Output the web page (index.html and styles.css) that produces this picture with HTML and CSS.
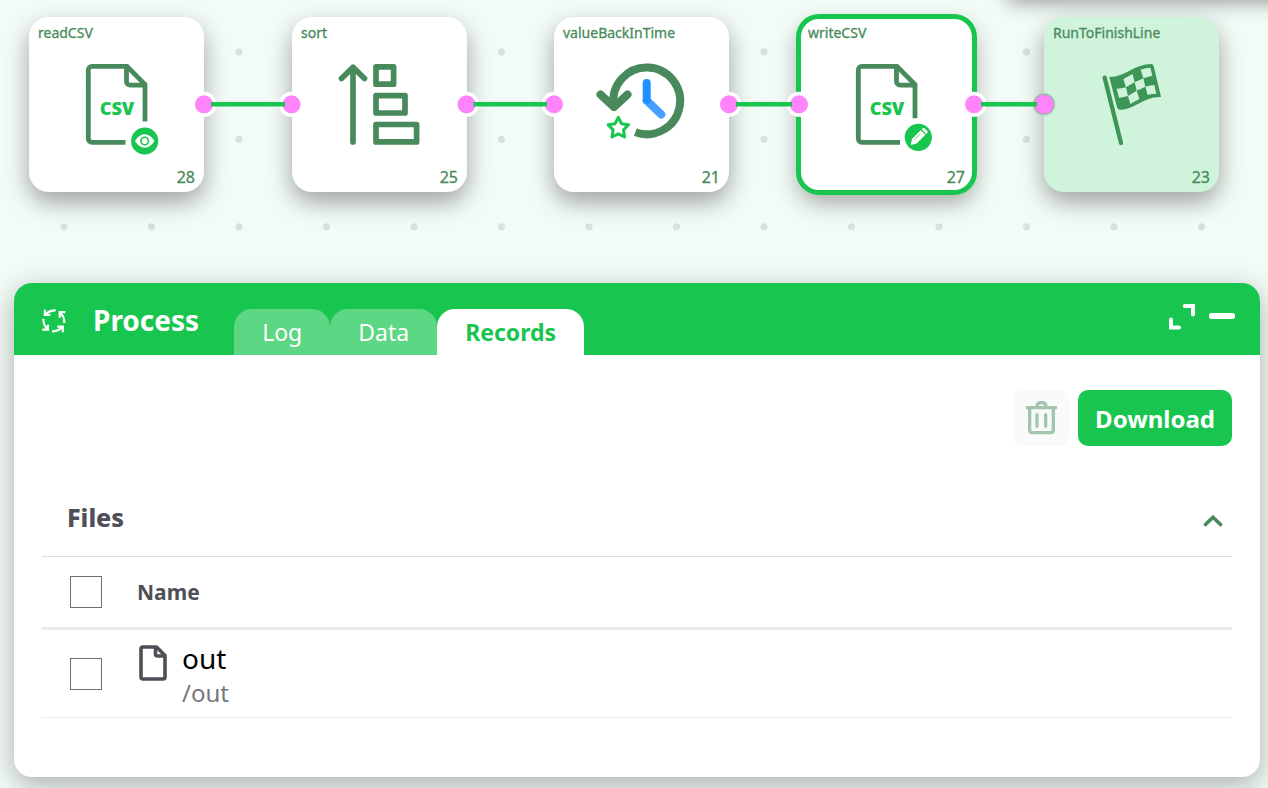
FILE: index.html
```html
<!DOCTYPE html>
<html lang="en">
<head>
<meta charset="utf-8">
<meta name="viewport" content="width=device-width, initial-scale=1">
<title>Process</title>
<link rel="stylesheet" href="styles.css">
</head>
<body>
<main class="app">
  <section class="canvas" aria-label="Pipeline">
    <svg class="grid" aria-hidden="true">
      <defs>
        <pattern id="dots" width="175" height="175" patternUnits="userSpaceOnUse">
          <circle cx="64" cy="51.8" r="3.6"/><circle cx="151.5" cy="51.8" r="3.6"/>
          <circle cx="64" cy="139.3" r="3.6"/><circle cx="151.5" cy="139.3" r="3.6"/>
        </pattern>
      </defs>
      <rect width="100%" height="100%" fill="url(#dots)"/>
    </svg>
    <div class="toolbar-shade"></div>

    <article class="node node-read">
      <h2 class="node-name">readCSV</h2>
      <svg class="node-icon" viewBox="0 0 96 96" aria-hidden="true">
        <g fill="none" stroke="#488a5b" stroke-width="4.8">
          <path d="M56.5 85.3H23a3.7 3.7 0 0 1-3.7-3.7V13.1a3.7 3.7 0 0 1 3.7-3.7H58L76 27.5V64.5"/>
          <path d="M57.5 9.4V24.5a3.7 3.7 0 0 0 3.7 3.7H76"/>
        </g>
        <text class="icon-text" x="48" y="58" text-anchor="middle">CSV</text>
        <circle cx="75.7" cy="84" r="13.6" fill="#18c54e"/>
        <path d="M66 84Q70 77.300 75.700 77.300T85.400 84Q81.400 90.700 75.700 90.700T66 84Z" fill="#fff"/>
        <circle cx="75.7" cy="84" r="3.8" fill="none" stroke="#18c54e" stroke-width="1.6"/>
      </svg>
      <span class="node-id">28</span>
    </article>

    <article class="node node-sort">
      <h2 class="node-name">sort</h2>
      <svg class="node-icon" viewBox="0 0 96 96" aria-hidden="true">
        <g fill="none" stroke="#488a5b" stroke-width="5.7" stroke-linejoin="round" stroke-linecap="round">
          <path d="M21 85V10.5M9.5 21.5L21 10.2L32.5 21.5"/>
          <rect x="44" y="9.8" width="17.6" height="17.4"/>
          <rect x="44" y="38.6" width="29" height="17.4"/>
          <rect x="44" y="67.5" width="40.6" height="17.4"/>
        </g>
      </svg>
      <span class="node-id">25</span>
    </article>

    <article class="node node-time">
      <h2 class="node-name">valueBackInTime</h2>
      <svg class="node-icon" viewBox="0 0 96 96" aria-hidden="true">
        <g fill="none" stroke-width="8">
          <path d="M19.600 48A33.400 33.400 0 1 1 41.300 75.200" stroke="#488a5b"/>
          <path d="M6.500 37.500L20 50L33.500 37.500" stroke="#488a5b" stroke-linecap="round" stroke-linejoin="round"/>
          <path d="M52.700 43.500L67.300 57.500" stroke="#47a0ff" stroke-linecap="round"/>
          <path d="M52.700 26V43" stroke="#1e90ff" stroke-linecap="round"/>
        </g>
        <path d="M24.300 60.300L27.500 66.700L34.500 67.800L29.500 72.900L30.600 80L24.300 76.800L18 80L19.100 72.900L14.100 67.800L21.100 66.700Z" fill="#fff" stroke="#18c54e" stroke-width="3" stroke-linejoin="round"/>
      </svg>
      <span class="node-id">21</span>
    </article>

    <article class="node node-write selected">
      <h2 class="node-name">writeCSV</h2>
      <svg class="node-icon" viewBox="0 0 96 96" aria-hidden="true">
        <g fill="none" stroke="#488a5b" stroke-width="4.8">
          <path d="M61 85.3H23a3.7 3.7 0 0 1-3.7-3.7V13.1a3.7 3.7 0 0 1 3.7-3.7H58L76 27.5V61.3"/>
          <path d="M57.5 9.4V24.5a3.7 3.7 0 0 0 3.7 3.7H76"/>
        </g>
        <text class="icon-text" x="48" y="58" text-anchor="middle">CSV</text>
        <circle cx="79.3" cy="80.3" r="13.6" fill="#18c54e"/>
        <g transform="translate(79.3 80.3) rotate(45)" fill="#fff">
          <path d="M-3.3-8V-9.2Q-3.3-10.8-1.7-10.8H1.7Q3.3-10.8 3.3-9.2V-8ZM-3.3-6.8H3.3V5.5L0 10.8L-3.3 5.5Z"/>
        </g>
        <path d="M75.500 82.600L81.300 76.800" stroke="#18c54e" stroke-width=".7"/>
      </svg>
      <span class="node-id">27</span>
    </article>

    <article class="node node-run">
      <h2 class="node-name">RunToFinishLine</h2>
      <svg class="node-icon" viewBox="342 171 288 288" aria-hidden="true">
        <path d="M404 233L453 429" stroke="#3d9657" stroke-width="13" stroke-linecap="round"/>
        <path d="M418 231C463 232 494 192 545 192Q549 192 551 198L573 291C522 288 490 332 448 329Q443 328 441 322Z" fill="#3d9657"/>
        <path d="M460 237L488 222L494 247L520 235L512 209Q526 203 541 203L547 227Q532 230 520 235L526 260Q540 255 553 255L559 281Q546 281 533 285L526 260L500 272L508 297L481 312L474 288L447 294L440 266Q454 266 468 262ZM494 247L468 262L474 288L500 272Z" fill="#d0f3dc" fill-rule="evenodd"/>
      </svg>
      <span class="node-id">23</span>
    </article>

    <svg class="edges" aria-hidden="true">
      <g fill="#fff">
        <circle cx="204" cy="104.300" r="12.500"/><circle cx="291.500" cy="104.300" r="12.500"/>
        <circle cx="466.500" cy="104.300" r="12.500"/><circle cx="554" cy="104.300" r="12.500"/>
        <circle cx="729" cy="104.300" r="12.500"/><circle cx="799" cy="104.300" r="12.500"/>
        <circle cx="974" cy="104.300" r="12.500"/>
      </g>
      <circle cx="1044" cy="104.300" r="11.500" fill="#a4dcb6"/>
      <circle cx="1044" cy="104.300" r="10.300" fill="#b39ab5"/>
      <g fill="#ff84fb">
        <circle cx="204" cy="104.300" r="9"/><circle cx="291.500" cy="104.300" r="9"/>
        <circle cx="466.500" cy="104.300" r="9"/><circle cx="554" cy="104.300" r="9"/>
        <circle cx="729" cy="104.300" r="9"/><circle cx="799" cy="104.300" r="9"/>
        <circle cx="974" cy="104.300" r="9"/><circle cx="1044" cy="104.300" r="9.400"/>
      </g>
      <path d="M211 104.300H285M473.500 104.300H547M736 104.300H792M981 104.300H1037" stroke="#18c54e" stroke-width="4.400"/>
    </svg>
  </section>

  <section class="panel" aria-labelledby="panel-title">
    <header class="panel-head">
      <svg class="cycle" viewBox="120 111 84 84" aria-hidden="true">
        <g fill="none" stroke="#fff" stroke-width="6.500">
          <path d="M167 121Q148 121 136 133M134.500 119V134.500H151"/>
          <path d="M193 159Q194 141 181 129M196 126.500H179V143"/>
          <path d="M156 184Q174 184 187 172M172 170H188.500V187"/>
          <path d="M130 147Q130 165 142 177M144 164V179H127"/>
        </g>
      </svg>
      <h1 class="panel-title" id="panel-title">Process</h1>
      <nav class="tabs" role="tablist">
        <button class="tab" type="button" role="tab" aria-selected="false">Log</button>
        <button class="tab" type="button" role="tab" aria-selected="false">Data</button>
        <button class="tab active" type="button" role="tab" aria-selected="true">Records</button>
      </nav>
      <div class="window-actions">
        <button class="plain" type="button" aria-label="Maximize">
          <svg width="26" height="26" viewBox="0 0 26 26"><path d="M15.800 2H24V10.400M2 15.600V23.500H10" fill="none" stroke="#fff" stroke-width="4" stroke-linecap="round"/></svg>
        </button>
        <button class="plain" type="button" aria-label="Minimize">
          <svg width="26" height="26" viewBox="0 0 26 26"><rect y="9" width="26" height="6" rx="2.500" fill="#fff"/></svg>
        </button>
      </div>
    </header>

    <div class="panel-body">
      <div class="actions">
        <button class="delete" type="button" aria-label="Delete" disabled>
          <svg width="56" height="56" viewBox="96 360 168 168">
            <g fill="none" stroke="#a3c5ae" stroke-width="10" stroke-linecap="round">
              <path d="M139 413H224M146 416V480Q146 488 154 488H209Q217 488 217 480V416M168 434V469M194 434V469"/>
              <path d="M168 410Q168 398 180 398H183Q195 398 195 410"/>
            </g>
          </svg>
        </button>
        <button class="download" type="button">Download</button>
      </div>

      <div class="files-head">
        <h2 class="files-title">Files</h2>
        <button class="plain collapse" type="button" aria-label="Collapse files" aria-expanded="true">
          <svg width="20" height="12" viewBox="0 0 20 12"><path d="M2.500 9.500L10 2.300L17.500 9.500" fill="none" stroke="#488a5b" stroke-width="3.600" stroke-linecap="round"/></svg>
        </button>
      </div>
      <table class="files">
        <thead>
          <tr>
            <th class="pick"><input class="check" type="checkbox" aria-label="Select all files"></th>
            <th class="name" scope="col">Name</th>
          </tr>
        </thead>
        <tbody>
          <tr>
            <td class="pick"><input class="check" type="checkbox" id="file-out"></td>
            <td class="name">
              <label class="file" for="file-out">
                <svg class="file-icon" width="32" height="36" viewBox="0 0 32 36" aria-hidden="true">
                  <path d="M6 2H19.500L28 10.500V32Q28 34 26 34H6Q4 34 4 32V4Q4 2 6 2Z" fill="none" stroke="#4f5057" stroke-width="3.600" stroke-linejoin="round"/>
                  <path d="M18.500 2V9Q18.500 11 20.500 11H28" fill="none" stroke="#4f5057" stroke-width="3.600"/>
                </svg>
                <span class="file-text">
                  <span class="file-name">out</span>
                  <span class="file-path">/out</span>
                </span>
              </label>
            </td>
          </tr>
        </tbody>
      </table>
    </div>
  </section>
</main>
</body>
</html>
```

FILE: styles.css
```css
* {
  box-sizing: border-box;
}

body {
  margin: 0;
  background: #f2fbf6;
  color: #4f5057;
  font-family: "Noto Sans", sans-serif;
}

h1,
h2 {
  margin: 0;
}

button {
  margin: 0;
  padding: 0;
  border: 0;
  font: inherit;
}

svg {
  display: block;
}

.app {
  display: flex;
  flex-direction: column;
  min-height: 100vh;
  overflow: hidden;
}

/* Pipeline canvas */
.canvas {
  position: relative;
  flex: none;
  height: 283px;
}

.grid,
.edges {
  position: absolute;
  inset: 0;
  width: 100%;
  height: 100%;
}

.grid {
  fill: #d9e1dd;
}

.edges {
  pointer-events: none;
}

.toolbar-shade {
  position: absolute;
  top: -60px;
  left: 1008px;
  right: -40px;
  height: 58px;
  box-shadow: 0 4px 20px rgba(0, 0, 0, 0.4);
}

.node {
  position: absolute;
  top: 17px;
  display: flex;
  flex-direction: column;
  width: 175px;
  height: 175px;
  padding: 8px 9px 5px;
  border-radius: 20px;
  background: #fff;
  box-shadow: 0 10px 24px rgba(0, 0, 0, 0.35);
  color: #488a5b;
}

.node-read {
  left: 29px;
}

.node-sort {
  left: 292px;
}

.node-time {
  left: 554px;
}

.node-write {
  left: 799px;
}

.node-run {
  left: 1044px;
  background: #d0f3dc;
}

.selected {
  outline: 5px solid #18c54e;
  outline-offset: -2px;
}

.node-name {
  font-size: 14px;
  font-weight: 400;
  line-height: 16px;
  -webkit-text-stroke: 0.3px;
}

.node-icon {
  align-self: center;
  width: 96px;
  height: 96px;
  margin-top: 16px;
  overflow: visible;
}

.icon-text {
  fill: #18c54e;
  font-size: 18px;
  font-weight: 900;
}

.node-id {
  align-self: flex-end;
  margin-top: auto;
  font-size: 16px;
  line-height: 20px;
  -webkit-text-stroke: 0.3px;
}

/* Process panel */
.panel {
  position: relative;
  flex: 1;
  margin: 0 8px 11px 14px;
  border-radius: 18px;
  background: #fff;
  box-shadow: 0 8px 30px rgba(0, 0, 0, 0.3);
}

.panel-head {
  display: flex;
  align-items: center;
  height: 72px;
  padding: 0 25px 0 26px;
  border-radius: 18px 18px 0 0;
  background: #18c54e;
  color: #fff;
}

.cycle {
  width: 28px;
  height: 28px;
  margin-top: 4px;
}

.panel-title {
  margin: 0 35px 0 25px;
  padding-top: 2px;
  font-size: 28px;
  font-weight: 700;
  line-height: 36px;
}

.tabs {
  display: flex;
  align-self: flex-end;
}

.tab {
  height: 46px;
  padding: 0 28px;
  border-radius: 18px 18px 0 0;
  background: #5dd783;
  color: #fff;
  font-size: 23px;
  line-height: 46px;
}

.tab.active {
  background: #fff;
  color: #18c54e;
  font-weight: 700;
}

.window-actions {
  display: flex;
  gap: 14px;
  margin-left: auto;
  padding-bottom: 4px;
}

.plain {
  background: none;
}

.panel-body {
  padding: 35px 28px 59px;
}

.actions {
  display: flex;
  justify-content: flex-end;
  gap: 9px;
}

.delete {
  width: 56px;
  height: 56px;
  border-radius: 10px;
  background: #f9fbfa;
}

.download {
  height: 56px;
  padding: 0 17px;
  border-radius: 10px;
  background: #18c54e;
  color: #fff;
  font-size: 24px;
  font-weight: 700;
}

.files-head {
  display: flex;
  align-items: center;
  justify-content: space-between;
  height: 111px;
  padding: 32px 9px 0 25px;
  border-bottom: 1px solid #dcdcdc;
}

.files-title {
  font-size: 25px;
  font-weight: 800;
  line-height: 32px;
}

.collapse {
  margin-top: 8px;
}

.files {
  width: 100%;
  border-collapse: separate;
  border-spacing: 0;
}

.files th,
.files td {
  padding: 0;
  text-align: left;
}

.files th {
  height: 73px;
  border-bottom: 3px solid #ebebeb;
  font-size: 21px;
  font-weight: 700;
}

.files td {
  height: 88px;
  border-bottom: 1px solid #ebebeb;
}

.files .pick {
  width: 95px;
  padding-left: 28px;
}

.check {
  display: block;
  width: 32px;
  height: 32px;
  margin: 0;
  border: 1px solid #6e6f75;
  background: #fff;
  appearance: none;
}

.check:checked {
  background: #18c54e;
}

.file {
  display: flex;
  gap: 13px;
  padding-top: 4px;
}

.file-icon {
  margin-top: 4px;
}

.file-text {
  display: flex;
  flex-direction: column;
}

.file-name {
  color: #000;
  font-size: 28px;
  line-height: 34px;
}

.file-path {
  color: #76777c;
  font-size: 24px;
  line-height: 36px;
}
```
